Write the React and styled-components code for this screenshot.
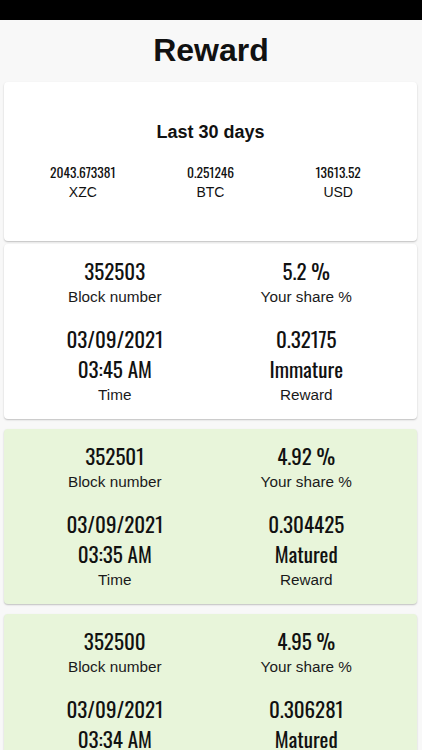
import React from "react";
import styled, { createGlobalStyle } from "styled-components";

const Global = createGlobalStyle`
  html, body { margin: 0; padding: 0; }
  body { background: #f8f8f8; font-family: "Liberation Sans", Arial, sans-serif; color: #111; }
  * { box-sizing: border-box; }
`;

const Screen = styled.div`
  height: 100vh;
  display: flex;
  flex-direction: column;
  overflow: hidden;
  background: #f8f8f8;
`;

const StatusBar = styled.div`
  height: 20px;
  flex: none;
  background: #000;
`;

const Scroll = styled.div`
  flex: 1;
  overflow-y: auto;
  scrollbar-width: none;
  &::-webkit-scrollbar { display: none; }
`;

const Title = styled.h1`
  margin: 0 0 2px;
  height: 60px;
  line-height: 60px;
  text-align: center;
  font-size: 32px;
  font-weight: 700;
  color: #111;
`;

const Card = styled.div`
  margin: ${(p) => p.$top}px 5px 0 4px;
  background: ${(p) => (p.$matured ? "#e8f5da" : "#ffffff")};
  border-radius: 4px;
  box-shadow: 0 1px 2px rgba(0, 0, 0, 0.18), 0 1px 1px rgba(0, 0, 0, 0.06);
  padding: ${(p) => p.$pad};
`;

const SummaryHeading = styled.div`
  text-align: center;
  font-size: 18px;
  font-weight: 700;
  line-height: 24px;
  margin-bottom: 18px;
`;

const SummaryGrid = styled.div`
  display: grid;
  grid-template-columns: repeat(3, 1fr);
`;

const Cell = styled.div`
  display: flex;
  flex-direction: column;
  align-items: center;
  text-align: center;
`;

const SmallValue = styled.div`
  font-family: "Oswald", "Liberation Sans", sans-serif;
  font-size: 13.5px;
  line-height: 20px;
  color: #111;
`;

const SmallLabel = styled.div`
  font-size: 14px;
  line-height: 20px;
  color: #111;
`;

const BlockGrid = styled.div`
  display: grid;
  grid-template-columns: 1fr 1fr;
  row-gap: 16px;
`;

const BigValue = styled.div`
  font-family: "Oswald", "Liberation Sans", sans-serif;
  font-size: 21px;
  font-weight: 400;
  line-height: 30px;
  color: #111;
`;

const Label = styled.div`
  font-size: 15.3px;
  line-height: 22px;
  color: #1a1a1a;
`;

const blocks = [
  { block: "352503", share: "5.2 %", date: "03/09/2021", time: "03:45 AM", reward: "0.32175", status: "Immature", top: 3 },
  { block: "352501", share: "4.92 %", date: "03/09/2021", time: "03:35 AM", reward: "0.304425", status: "Matured", top: 10 },
  { block: "352500", share: "4.95 %", date: "03/09/2021", time: "03:34 AM", reward: "0.306281", status: "Matured", top: 10 },
  { block: "352499", share: "4.97 %", date: "03/09/2021", time: "03:31 AM", reward: "0.307512", status: "Matured", top: 10 },
];

export default function App() {
  return (
    <Screen>
      <Global />
      <StatusBar />
      <Scroll>
        <Title>Reward</Title>
        <Card $top={0} $pad="38px 15px 39px">
          <SummaryHeading>Last 30 days</SummaryHeading>
          <SummaryGrid>
            <Cell>
              <SmallValue>2043.673381</SmallValue>
              <SmallLabel>XZC</SmallLabel>
            </Cell>
            <Cell>
              <SmallValue>0.251246</SmallValue>
              <SmallLabel>BTC</SmallLabel>
            </Cell>
            <Cell>
              <SmallValue>13613.52</SmallValue>
              <SmallLabel>USD</SmallLabel>
            </Cell>
          </SummaryGrid>
        </Card>
        {blocks.map((b) => (
          <Card key={b.block} $top={b.top} $matured={b.status === "Matured"} $pad="12px 15px 13px">
            <BlockGrid>
              <Cell>
                <BigValue>{b.block}</BigValue>
                <Label>Block number</Label>
              </Cell>
              <Cell>
                <BigValue>{b.share}</BigValue>
                <Label>Your share %</Label>
              </Cell>
              <Cell>
                <BigValue>{b.date}</BigValue>
                <BigValue>{b.time}</BigValue>
                <Label>Time</Label>
              </Cell>
              <Cell>
                <BigValue>{b.reward}</BigValue>
                <BigValue>{b.status}</BigValue>
                <Label>Reward</Label>
              </Cell>
            </BlockGrid>
          </Card>
        ))}
      </Scroll>
    </Screen>
  );
}
